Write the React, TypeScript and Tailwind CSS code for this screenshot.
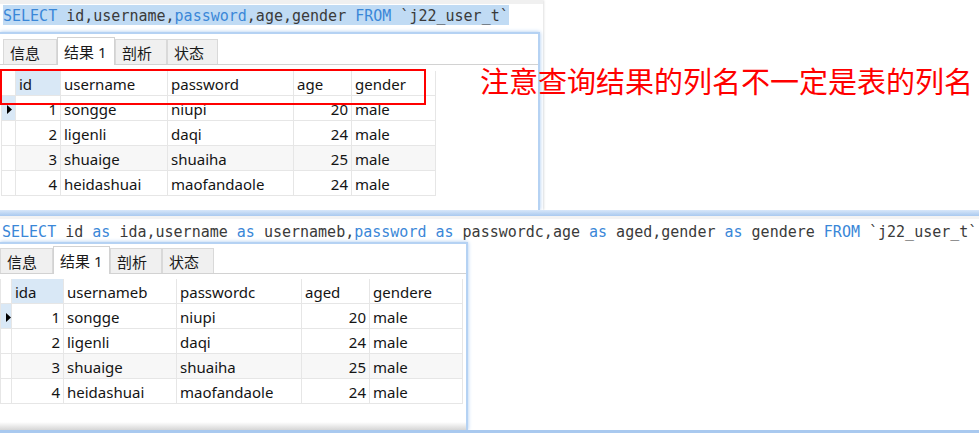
import React from "react";

type Seg = { t: string; k?: boolean };

const sqlA: Seg[] = [
  { t: "SELECT", k: true },
  { t: " id,username," },
  { t: "password", k: true },
  { t: ",age,gender " },
  { t: "FROM", k: true },
  { t: " `j22_user_t`" },
];

const sqlB: Seg[] = [
  { t: "SELECT", k: true },
  { t: " id " },
  { t: "as", k: true },
  { t: " ida,username " },
  { t: "as", k: true },
  { t: " usernameb," },
  { t: "password", k: true },
  { t: " " },
  { t: "as", k: true },
  { t: " passwordc,age " },
  { t: "as", k: true },
  { t: " aged,gender " },
  { t: "as", k: true },
  { t: " gendere " },
  { t: "FROM", k: true },
  { t: " `j22_user_t`" },
];

const rows = [
  ["1", "songge", "niupi", "20", "male"],
  ["2", "ligenli", "daqi", "24", "male"],
  ["3", "shuaige", "shuaiha", "25", "male"],
  ["4", "heidashuai", "maofandaole", "24", "male"],
];

function SqlLine({ segs }: { segs: Seg[] }) {
  return (
    <>
      {segs.map((s, i) => (
        <span key={i} className={s.k ? "text-[#3a87d8]" : "text-[#3a3a3a]"}>
          {s.t}
        </span>
      ))}
    </>
  );
}

function Tabs({ lead, widths }: { lead: string; widths: string[] }) {
  const labels = ["信息", "结果 1", "剖析", "状态"];
  return (
    <div className={`flex items-end h-[28px] border-b border-[#d2d2d2] ${lead}`}>
      {labels.map((l, i) =>
        i === 1 ? (
          <div
            key={l}
            className={`${widths[i]} h-[28px] -mb-px bg-white border border-b-0 border-[#d2d2d2] pl-[6px] pt-[2px] flex items-center`}
          >
            {l}
          </div>
        ) : (
          <div
            key={l}
            className={`${widths[i]} h-[25px] bg-[#f0f0f0] border border-b-0 border-[#d9d9d9] pl-[6px] pt-[2px] flex items-center`}
          >
            {l}
          </div>
        )
      )}
    </div>
  );
}

function Grid({ cols, headers, lead }: { cols: string; headers: string[]; lead: string }) {
  const cell = "border-r border-b border-[#e6e6e6] flex items-center pt-[2px] overflow-hidden whitespace-nowrap";
  return (
    <div className={`border-l border-[#e6e6e6] text-[15px] text-[#141414] font-['Noto_Sans',sans-serif] ${lead}`}>
      <div className={`grid ${cols} h-[25px]`}>
        <div className={cell} />
        {headers.map((h, i) => (
          <div key={h} className={`${cell} pl-[3px] ${i === 0 ? "bg-[#d9e8f6]" : "bg-white"}`}>
            {h}
          </div>
        ))}
      </div>
      {rows.map((r, ri) => (
        <div key={ri} className={`grid ${cols} h-[25px]`}>
          <div className={`${cell} ${ri === 0 ? "bg-[#d9e8f6]" : "bg-white"} pl-[5px]`}>
            {ri === 0 && (
              <svg width="5" height="9" viewBox="0 0 5 9">
                <path d="M0 0 L5 4.5 L0 9 Z" fill="#000" />
              </svg>
            )}
          </div>
          {r.map((v, ci) => (
            <div
              key={ci}
              className={`${cell} ${ri === 2 ? "bg-[#f7f7f7]" : "bg-white"} ${
                ci === 0 || ci === 3 ? "justify-end pr-[3px]" : "pl-[3px]"
              }`}
            >
              {v}
            </div>
          ))}
        </div>
      ))}
    </div>
  );
}

export default function App() {
  const cjk = "font-['Noto_Sans','Noto_Sans_CJK_SC',sans-serif]";
  return (
    <div className={`relative w-[979px] h-[433px] overflow-hidden bg-white ${cjk}`}>
      {/* first capture */}
      <div className="h-[210px] w-[543px] flex flex-col bg-white shadow-[1px_0_2px_rgba(0,0,0,0.12)]">
        <div className="h-[4px] bg-[#f0f0f0]" />
        <div className="h-[24px] pl-[3px] pt-[1px] text-[15px] whitespace-pre font-['DejaVu_Sans_Mono',monospace]">
          <span className="bg-[#c0dbf4] inline-block h-[20px] leading-[22px]">
            <SqlLine segs={sqlA} />
          </span>
        </div>
        <div className="h-[4px]" />
        <div className="flex-1 mr-[3px] bg-white border-t-2 border-r-2 border-[#b5d2f3] shadow-[0_0_4px_#a7c8ef] text-[15px] text-[#1a1a1a]">
          <div className="pt-[3px]">
            <Tabs lead="pl-[3px]" widths={["w-[54px]", "w-[58px]", "w-[52px]", "w-[51px]"]} />
          </div>
          <Grid
            lead="mt-[6px] ml-px"
            cols="grid-cols-[14px_45px_107px_126px_58px_84px] w-[434px]"
            headers={["id", "username", "password", "age", "gender"]}
          />
        </div>
      </div>

      {/* second capture */}
      <div className="h-[223px] flex flex-col">
        <div className="h-[6px] bg-gradient-to-b from-[#d8e7f9] to-[#a9c9ef]" />
        <div className="h-[3px] bg-[#f3f3f3]" />
        <div className="h-[23px] pl-[2px] pt-[3px] text-[15px] leading-[20px] whitespace-pre font-['DejaVu_Sans_Mono',monospace]">
          <SqlLine segs={sqlB} />
        </div>
        <div className="flex-1 flex flex-col w-[468px] bg-white border-t-2 border-r-2 border-[#b5d2f3] shadow-[0_0_4px_#a7c8ef] text-[15px] text-[#1a1a1a]">
          <div className="pt-[2px]">
            <Tabs lead="pl-0" widths={["w-[53px]", "w-[57px]", "w-[52px]", "w-[52px]"]} />
          </div>
          <Grid
            lead="mt-[5px]"
            cols="grid-cols-[11px_52px_113px_125px_68px_93px] w-[463px]"
            headers={["ida", "usernameb", "passwordc", "aged", "gendere"]}
          />
          <div className="flex-1" />
          <div className="h-[8px] bg-gradient-to-b from-white to-[#d6d6d6]" />
        </div>
        <div className="h-[3px] bg-[#a9c9ef]" />
      </div>

      {/* annotations */}
      <div className="absolute left-0 top-[69px] w-[426px] h-[36px] border-2 border-[#ff0000]" />
      <div className="absolute left-[480px] top-[64px] text-[29px] leading-[32px] text-[#ff0000] font-['Noto_Sans_CJK_SC',sans-serif] whitespace-nowrap">
        注意查询结果的列名不一定是表的列名
      </div>
    </div>
  );
}
